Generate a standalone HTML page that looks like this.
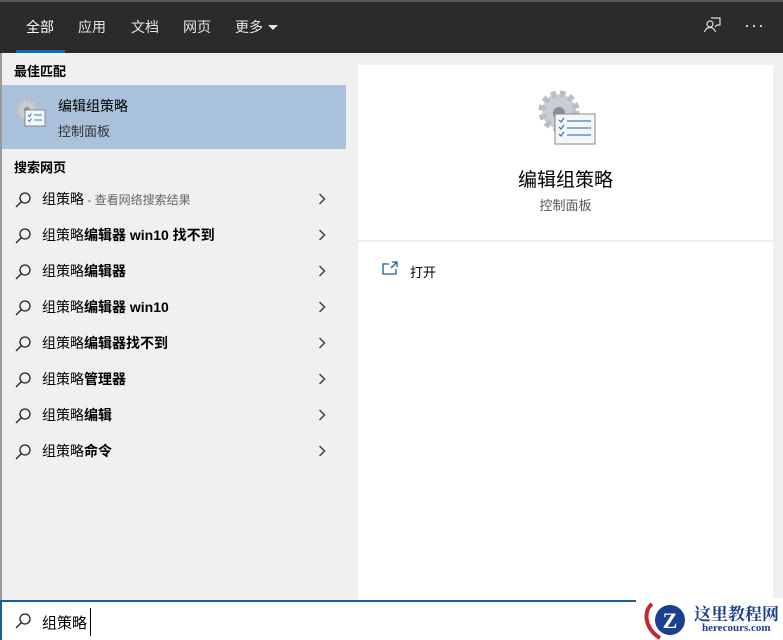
<!DOCTYPE html>
<html><head><meta charset="utf-8"><style>
*{margin:0;padding:0;box-sizing:border-box}
body{width:783px;height:640px;overflow:hidden;background:#f0f0f0;font-family:"Liberation Sans","Noto Sans CJK SC",sans-serif;position:relative;color:#000}
.top{position:absolute;left:0;top:0;width:783px;height:53px;background:#2b2b2b;border-top:2px solid #555}
.tab{position:absolute;top:15px;color:#e6e6e6;font-size:14px}
.ul{position:absolute;left:16px;top:48px;width:49px;height:3px;background:#0f6cbd}
.left{position:absolute;left:0;top:53px;width:346px;height:547px;background:#f0f0f0;border-left:2px solid #999}
.hdr{position:absolute;left:12px;font-size:13px;font-weight:bold}
.best{position:absolute;left:2px;top:85px;width:344px;height:64px;background:#a9c1da}
.row{position:absolute;left:14px;height:36px;width:320px;font-size:14px;line-height:36px}
.row svg.s{position:absolute;left:0;top:10px}
.row .t{position:absolute;left:28px}
.row svg.c{position:absolute;right:8px;top:12px}
.card{position:absolute;left:358px;top:65px;width:415px;height:535px;background:#fff}
.search{position:absolute;left:0;top:600px;width:640px;height:40px;background:#fff;border:2px solid #1c5d9c;border-bottom:none}
</style></head><body>
<div class="top">
<span class="tab" style="left:26px;color:#fff">全部</span>
<span class="tab" style="left:78px">应用</span>
<span class="tab" style="left:131px">文档</span>
<span class="tab" style="left:183px">网页</span>
<span class="tab" style="left:235px">更多</span>
<svg style="position:absolute;left:267px;top:22px" width="12" height="7" viewBox="0 0 12 7"><path d="M1 1h10L6 6z" fill="#e6e6e6"/></svg>
<div class="ul"></div>
<svg style="position:absolute;left:703px;top:14px" width="18" height="18" viewBox="0 0 18 18" fill="none" stroke="#ddd" stroke-width="1.2"><circle cx="7" cy="8" r="3"/><path d="M1.5 16c1-3 3-4.5 5.5-4.5s4.5 1.5 5.5 4.5"/><path d="M8 2h9v7h-3l-2 2"/></svg>
<svg style="position:absolute;left:745px;top:22px" width="18" height="4"><circle cx="2" cy="2" r="1.1" fill="#ddd"/><circle cx="9" cy="2" r="1.1" fill="#ddd"/><circle cx="16" cy="2" r="1.1" fill="#ddd"/></svg>
</div>
<div class="left">
<div class="hdr" style="top:8px">最佳匹配</div>
<div class="hdr" style="top:104px">搜索网页</div>
</div>
<div class="best">
<svg style="position:absolute;left:12px;top:12px" width="34" height="34" viewBox="0 0 34 34"><circle cx="13" cy="13" r="10" fill="#c9ced4" stroke="#b8bec6" stroke-width="4" stroke-dasharray="3 2"/><circle cx="13" cy="13" r="3" fill="#8a8f96"/><rect x="11" y="13" width="20" height="16" fill="#f4f6f8" stroke="#888"/><path d="M14 18l1.5 1.5 2-3M14 23l1.5 1.5 2-3M20 18h8M20 23h8" stroke="#3b7dc4" fill="none"/></svg>
<div style="position:absolute;left:56px;top:11px;font-size:14px">编辑组策略</div>
<div style="position:absolute;left:56px;top:36px;font-size:13px;color:#333">控制面板</div>
</div>
<div class="row" style="top:181px"><svg class="s" width="18" height="18" viewBox="0 0 18 18" fill="none" stroke="#222" stroke-width="1.3"><circle cx="11" cy="7" r="5"/><path d="M7.5 10.5L2 16"/></svg><span class="t">组策略<span style="color:#666;font-size:12px"> - 查看网络搜索结果</span></span><svg class="c" width="8" height="12" viewBox="0 0 8 12"><path d="M1.5 1l5 5-5 5" stroke="#444" stroke-width="1.5" fill="none"/></svg></div>
<div class="row" style="top:217px"><svg class="s" width="18" height="18" viewBox="0 0 18 18" fill="none" stroke="#222" stroke-width="1.3"><circle cx="11" cy="7" r="5"/><path d="M7.5 10.5L2 16"/></svg><span class="t">组策略<b>编辑器 win10 找不到</b></span><svg class="c" width="8" height="12" viewBox="0 0 8 12"><path d="M1.5 1l5 5-5 5" stroke="#444" stroke-width="1.5" fill="none"/></svg></div>
<div class="row" style="top:253px"><svg class="s" width="18" height="18" viewBox="0 0 18 18" fill="none" stroke="#222" stroke-width="1.3"><circle cx="11" cy="7" r="5"/><path d="M7.5 10.5L2 16"/></svg><span class="t">组策略<b>编辑器</b></span><svg class="c" width="8" height="12" viewBox="0 0 8 12"><path d="M1.5 1l5 5-5 5" stroke="#444" stroke-width="1.5" fill="none"/></svg></div>
<div class="row" style="top:289px"><svg class="s" width="18" height="18" viewBox="0 0 18 18" fill="none" stroke="#222" stroke-width="1.3"><circle cx="11" cy="7" r="5"/><path d="M7.5 10.5L2 16"/></svg><span class="t">组策略<b>编辑器 win10</b></span><svg class="c" width="8" height="12" viewBox="0 0 8 12"><path d="M1.5 1l5 5-5 5" stroke="#444" stroke-width="1.5" fill="none"/></svg></div>
<div class="row" style="top:325px"><svg class="s" width="18" height="18" viewBox="0 0 18 18" fill="none" stroke="#222" stroke-width="1.3"><circle cx="11" cy="7" r="5"/><path d="M7.5 10.5L2 16"/></svg><span class="t">组策略<b>编辑器找不到</b></span><svg class="c" width="8" height="12" viewBox="0 0 8 12"><path d="M1.5 1l5 5-5 5" stroke="#444" stroke-width="1.5" fill="none"/></svg></div>
<div class="row" style="top:361px"><svg class="s" width="18" height="18" viewBox="0 0 18 18" fill="none" stroke="#222" stroke-width="1.3"><circle cx="11" cy="7" r="5"/><path d="M7.5 10.5L2 16"/></svg><span class="t">组策略<b>管理器</b></span><svg class="c" width="8" height="12" viewBox="0 0 8 12"><path d="M1.5 1l5 5-5 5" stroke="#444" stroke-width="1.5" fill="none"/></svg></div>
<div class="row" style="top:397px"><svg class="s" width="18" height="18" viewBox="0 0 18 18" fill="none" stroke="#222" stroke-width="1.3"><circle cx="11" cy="7" r="5"/><path d="M7.5 10.5L2 16"/></svg><span class="t">组策略<b>编辑</b></span><svg class="c" width="8" height="12" viewBox="0 0 8 12"><path d="M1.5 1l5 5-5 5" stroke="#444" stroke-width="1.5" fill="none"/></svg></div>
<div class="row" style="top:433px"><svg class="s" width="18" height="18" viewBox="0 0 18 18" fill="none" stroke="#222" stroke-width="1.3"><circle cx="11" cy="7" r="5"/><path d="M7.5 10.5L2 16"/></svg><span class="t">组策略<b>命令</b></span><svg class="c" width="8" height="12" viewBox="0 0 8 12"><path d="M1.5 1l5 5-5 5" stroke="#444" stroke-width="1.5" fill="none"/></svg></div>
<div class="card">
<svg style="position:absolute;left:177px;top:22px" width="64" height="64" viewBox="0 0 64 64"><circle cx="24" cy="24" r="17" fill="#c9ced4" stroke="#b8bec6" stroke-width="7" stroke-dasharray="5 4"/><circle cx="24" cy="26" r="6" fill="#8a8f96"/><rect x="20" y="27" width="40" height="30" fill="#f4f6f8" stroke="#888"/><path d="M24 33l2 2 3-4M24 40l2 2 3-4M24 47l2 2 3-4M32 34h24M32 41h24M32 48h24" stroke="#3b7dc4" fill="none" stroke-width="1.3"/></svg>
<div style="position:absolute;left:0;width:415px;top:100px;text-align:center;font-size:19px">编辑组策略</div>
<div style="position:absolute;left:0;width:415px;top:130px;text-align:center;font-size:13px;color:#555">控制面板</div>
<div style="position:absolute;left:0;top:175px;width:415px;height:2px;background:#f0f0f0"></div>
<svg style="position:absolute;left:24px;top:196px" width="16" height="14" viewBox="0 0 16 14" fill="none" stroke="#1c5d9c" stroke-width="1.3"><path d="M7 3H1v10h13V8M10 1h5v5M15 1l-6 6"/></svg>
<div style="position:absolute;left:52px;top:197px;font-size:13px">打开</div>
</div>
<div class="search">
<svg style="position:absolute;left:12px;top:10px" width="18" height="18" viewBox="0 0 18 18" fill="none" stroke="#222" stroke-width="1.3"><circle cx="11" cy="7" r="5"/><path d="M7.5 10.5L2 16"/></svg>
<span style="position:absolute;left:40px;top:10px;font-size:15px">组策略</span>
<span style="position:absolute;left:88px;top:6px;width:1px;height:28px;background:#000"></span>
</div>
<div style="position:absolute;left:636px;top:598px;width:147px;height:42px;background:#fff">
<svg style="position:absolute;left:4px;top:2px" width="54" height="40" viewBox="0 0 54 40"><path d="M12 4C2 12 6 30 20 38" stroke="#c0282d" stroke-width="4" fill="none"/><circle cx="30" cy="20" r="15" fill="#1b3f8f"/><text x="30" y="28" text-anchor="middle" font-size="22" font-weight="bold" fill="#fff" font-family="Liberation Serif">Z</text></svg>
<div style="position:absolute;left:58px;top:2px;font-size:17px;font-weight:bold;color:#1b3f8f;font-family:'Liberation Serif','Noto Serif CJK SC',serif">这里教程网</div>
<div style="position:absolute;left:66px;top:24px;font-size:11px;font-weight:bold;color:#1b3f8f;font-family:'Liberation Serif',serif">herecours.com</div>
</div>
</body></html>
